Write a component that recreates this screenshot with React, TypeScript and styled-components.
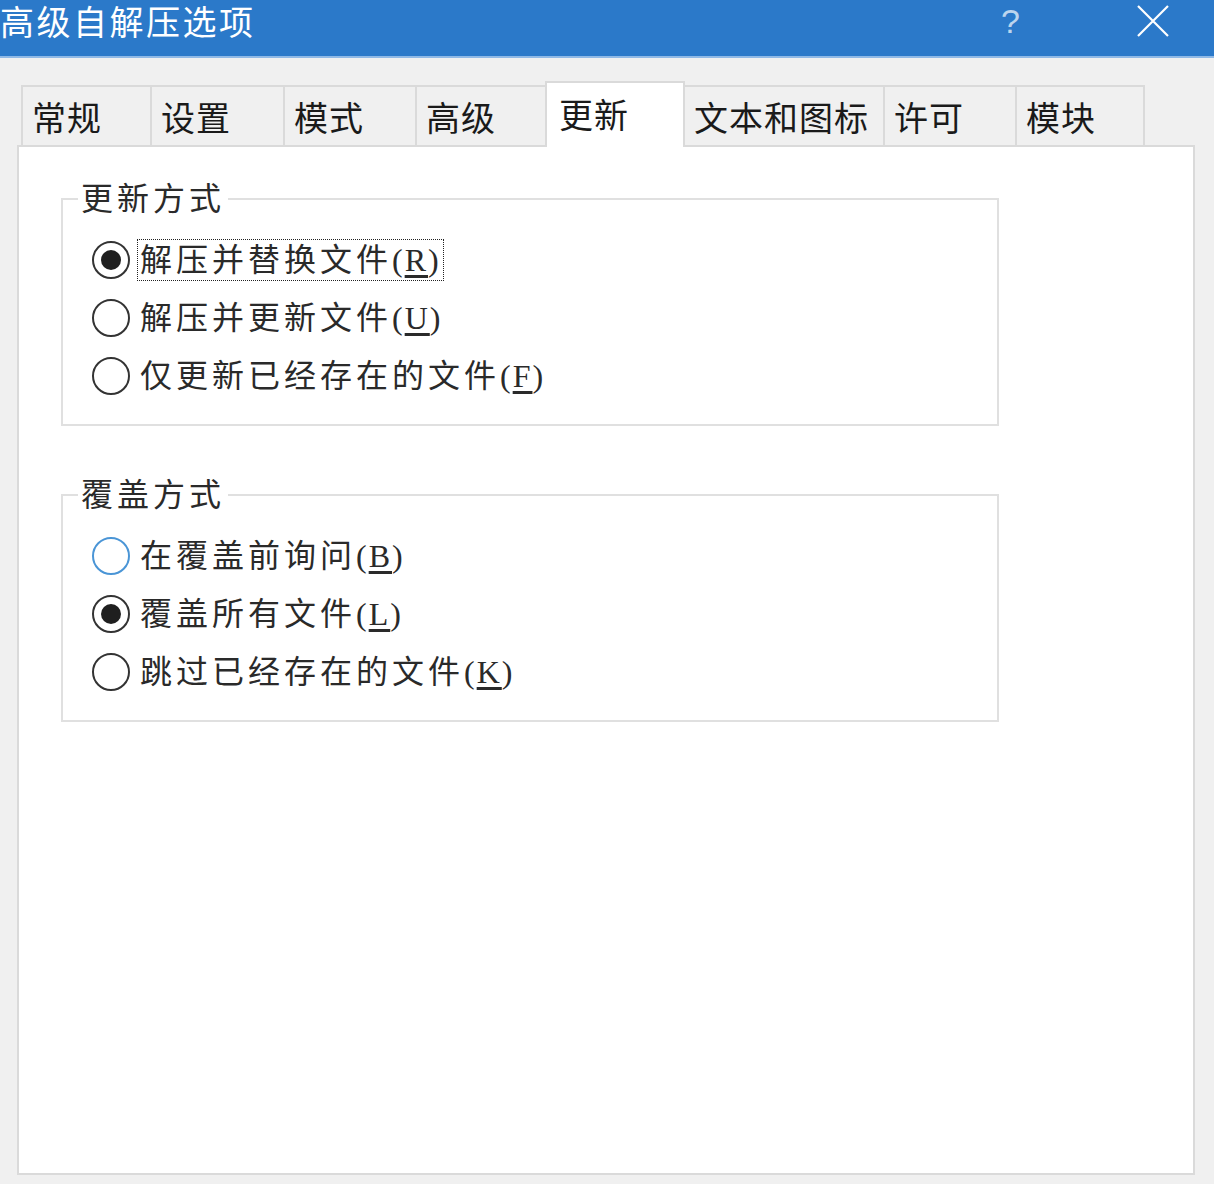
import styled, { createGlobalStyle } from 'styled-components';

const GlobalStyle = createGlobalStyle`
  html, body {
    margin: 0;
    padding: 0;
    background: #f0f0f0;
  }
  * {
    box-sizing: border-box;
  }
`;

const tabs = [
  { label: '常规', width: 131 },
  { label: '设置', width: 135 },
  { label: '模式', width: 134 },
  { label: '高级', width: 132 },
  { label: '更新', width: 140, active: true },
  { label: '文本和图标', width: 202 },
  { label: '许可', width: 134 },
  { label: '模块', width: 130 },
];

const groups = [
  {
    title: '更新方式',
    options: [
      { text: '解压并替换文件', key: 'R', checked: true, focused: true },
      { text: '解压并更新文件', key: 'U' },
      { text: '仅更新已经存在的文件', key: 'F' },
    ],
  },
  {
    title: '覆盖方式',
    options: [
      { text: '在覆盖前询问', key: 'B', hover: true },
      { text: '覆盖所有文件', key: 'L', checked: true },
      { text: '跳过已经存在的文件', key: 'K' },
    ],
  },
];

export default function App() {
  return (
    <Window>
      <GlobalStyle />
      <TitleBar>
        <Title>高级自解压选项</Title>
        <TitleButtons>
          <HelpMark>?</HelpMark>
          <CloseIcon width="34" height="34" viewBox="0 0 34 34">
            <path d="M2 2 L32 32 M32 2 L2 32" stroke="#ffffff" strokeWidth="2.2" fill="none" />
          </CloseIcon>
        </TitleButtons>
      </TitleBar>
      <Body>
        <TabStrip>
          {tabs.map((t) => (
            <Tab key={t.label} $width={t.width} $active={!!t.active}>
              {t.label}
            </Tab>
          ))}
        </TabStrip>
        <Panel>
          {groups.map((g) => (
            <Group key={g.title}>
              <Legend>{g.title}</Legend>
              {g.options.map((o) => (
                <OptionRow key={o.key}>
                  <RadioCircle $checked={!!o.checked} $hover={!!o.hover} />
                  <OptionLabel $focused={!!o.focused}>
                    {o.text}
                    <Accel>
                      (<u>{o.key}</u>)
                    </Accel>
                  </OptionLabel>
                </OptionRow>
              ))}
            </Group>
          ))}
        </Panel>
      </Body>
    </Window>
  );
}

const Window = styled.div`
  display: flex;
  flex-direction: column;
  width: 1214px;
  height: 1184px;
  background: #f0f0f0;
`;

const TitleBar = styled.div`
  display: flex;
  align-items: center;
  justify-content: space-between;
  height: 58px;
  background: #2b79c9;
  border-bottom: 2px solid #8fb9e6;
  padding-bottom: 14px;
`;

const Title = styled.div`
  color: #ffffff;
  font-family: "Noto Sans CJK SC", sans-serif;
  font-size: 34px;
  letter-spacing: 2.5px;
  line-height: 42px;
`;

const TitleButtons = styled.div`
  display: flex;
  align-items: center;
  gap: 116px;
  padding-right: 44px;
`;

const HelpMark = styled.span`
  color: rgba(255, 255, 255, 0.7);
  font-family: "Liberation Sans", sans-serif;
  font-size: 34px;
  line-height: 38px;
`;

const CloseIcon = styled.svg`
  display: block;
`;

const Body = styled.div`
  flex: 1;
  display: flex;
  flex-direction: column;
  padding: 24px 19px 9px 17px;
`;

const TabStrip = styled.div`
  display: flex;
  align-items: flex-end;
  height: 65px;
  padding-left: 4px;
  position: relative;
  z-index: 1;
  margin-bottom: -2px;
`;

const Tab = styled.div<{ $width: number; $active: boolean }>`
  display: flex;
  align-items: center;
  width: ${(p) => p.$width}px;
  height: ${(p) => (p.$active ? 66 : 62)}px;
  padding-left: ${(p) => (p.$active ? 12 : 9)}px;
  padding-bottom: ${(p) => (p.$active ? 4 : 0)}px;
  background: ${(p) => (p.$active ? '#ffffff' : '#f0f0f0')};
  border: 2px solid #dadada;
  border-bottom: ${(p) => (p.$active ? 'none' : '2px solid #dadada')};
  margin-left: -2px;
  font-family: "Noto Sans CJK SC", sans-serif;
  font-size: 34px;
  letter-spacing: 1px;
  color: #1a1a1a;
  &:first-child {
    margin-left: 0;
  }
`;

const Panel = styled.div`
  flex: 1;
  background: #ffffff;
  border: 2px solid #dadada;
  padding: 32px 0 0 42px;
`;

const Group = styled.fieldset`
  width: 938px;
  margin: 0 0 49px 0;
  padding: 12px 0 19px 29px;
  border: 2px solid #e0e0e0;
  min-inline-size: 0;
`;

const Legend = styled.legend`
  margin-left: -14px;
  padding: 0 3px;
  height: 40px;
  line-height: 40px;
  font-family: "Liberation Serif", "Noto Sans CJK SC", serif;
  font-size: 32px;
  letter-spacing: 4px;
  color: #2a2a2a;
`;

const OptionRow = styled.div`
  display: flex;
  align-items: center;
  height: 58px;
`;

const RadioCircle = styled.span<{ $checked: boolean; $hover: boolean }>`
  display: flex;
  align-items: center;
  justify-content: center;
  width: 38px;
  height: 38px;
  border-radius: 50%;
  border: 2px solid ${(p) => (p.$hover ? '#4a95d6' : '#333333')};
  background: #ffffff;
  flex-shrink: 0;
  &::after {
    content: '';
    display: ${(p) => (p.$checked ? 'block' : 'none')};
    width: 20px;
    height: 20px;
    border-radius: 50%;
    background: #1f1f1f;
  }
`;

const OptionLabel = styled.span<{ $focused: boolean }>`
  margin-left: 7px;
  padding: 0 2px;
  height: 42px;
  line-height: 40px;
  border: 1px dotted ${(p) => (p.$focused ? '#222222' : 'transparent')};
  font-family: "Liberation Serif", "Noto Sans CJK SC", serif;
  font-size: 32px;
  letter-spacing: 4px;
  color: #2a2a2a;
  white-space: nowrap;
`;

const Accel = styled.span`
  letter-spacing: 2px;
  u {
    text-underline-offset: 4px;
  }
`;
